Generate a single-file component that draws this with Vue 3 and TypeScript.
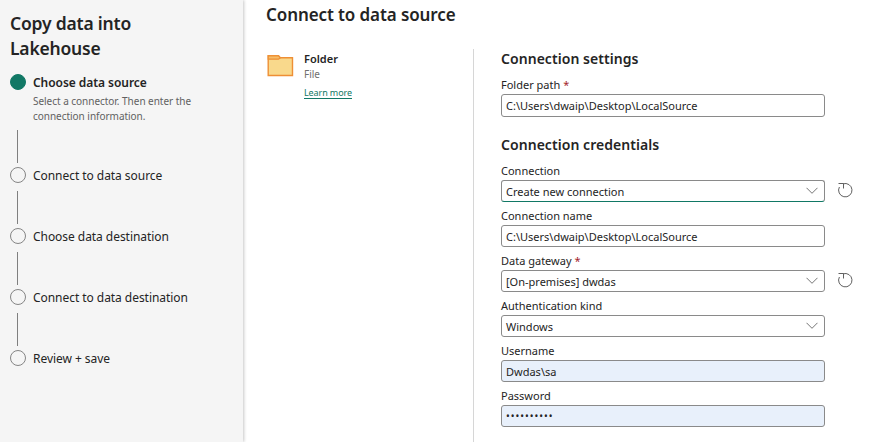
<script setup lang="ts">
const steps = [
  { title: 'Choose data source', desc: 'Select a connector. Then enter the connection information.', active: true },
  { title: 'Connect to data source' },
  { title: 'Choose data destination' },
  { title: 'Connect to data destination' },
  { title: 'Review + save' },
]

type Field = {
  label: string
  value: string
  required?: boolean
  select?: boolean
  refresh?: boolean
  filled?: boolean
  focus?: boolean
  secret?: boolean
}

const path = 'C:\\Users\\dwaip\\Desktop\\LocalSource'

const credentials: Field[] = [
  { label: 'Connection', value: 'Create new connection', select: true, refresh: true, focus: true },
  { label: 'Connection name', value: path },
  { label: 'Data gateway', value: '[On-premises] dwdas', required: true, select: true, refresh: true },
  { label: 'Authentication kind', value: 'Windows', select: true },
  { label: 'Username', value: 'Dwdas\\sa', filled: true },
  { label: 'Password', value: '••••••••••', filled: true, secret: true },
]
</script>

<template>
  <div class="page">
    <aside class="side">
      <h1 class="side-title">Copy data into Lakehouse</h1>
      <ol class="steps">
        <li v-for="(s, i) in steps" :key="s.title" class="step">
          <div class="step-head">
            <span class="dot" :class="{ 'dot-on': s.active }"></span>
            <div class="step-text">
              <div class="step-name" :class="{ 'step-name-on': s.active }">{{ s.title }}</div>
              <div v-if="s.desc" class="step-desc">{{ s.desc }}</div>
            </div>
          </div>
          <div v-if="i < steps.length - 1" class="step-line"></div>
        </li>
      </ol>
    </aside>

    <main class="main">
      <h2 class="main-title">Connect to data source</h2>
      <div class="body">
        <section class="source">
          <svg class="folder" width="27" height="23" viewBox="0 0 27 23">
            <path d="M1.200 21.500V1.800h10.300l1.800 2h12.200v17.700z" fill="#f9d98c" stroke="#ee8f35" stroke-width="1.400"/>
            <path d="M1.200 1.800h10.300l1.800 2-1.800 1.400H1.200z" fill="#f6bd68" stroke="#ee8f35" stroke-width="1.200"/>
          </svg>
          <div class="source-text">
            <div class="source-name">Folder</div>
            <div class="source-kind">File</div>
            <a class="source-link">Learn more</a>
          </div>
        </section>

        <section class="form">
          <h3 class="form-title">Connection settings</h3>
          <div class="field">
            <label class="field-label">Folder path <span class="req">*</span></label>
            <div class="box box-tall"><span>{{ path }}</span></div>
          </div>

          <h3 class="form-title form-title-2">Connection credentials</h3>
          <div v-for="f in credentials" :key="f.label" class="field">
            <label class="field-label">{{ f.label }} <span v-if="f.required" class="req">*</span></label>
            <div class="field-row">
              <div class="box" :class="{ 'box-filled': f.filled, 'box-focus': f.focus, 'box-secret': f.secret }">
                <span>{{ f.value }}</span>
                <svg v-if="f.select" class="chevron" width="12" height="7" viewBox="0 0 12 7">
                  <path d="M.5.800l5.500 5.500L11.500.800" fill="none" stroke="#757575" stroke-width="1"/>
                </svg>
              </div>
              <svg v-if="f.refresh" class="refresh" width="17" height="17" viewBox="0 0 17 17">
                <path d="M6 1.900A6.700 6.700 0 1 1 2.400 5" fill="none" stroke="#616161" stroke-width="1"/>
                <path d="M1.500 1.500H6.500V6.500" fill="none" stroke="#616161" stroke-width="1"/>
              </svg>
            </div>
          </div>
        </section>
      </div>
    </main>
  </div>
</template>

<style>
html, body { margin: 0; background: #fff; }
</style>

<style scoped>
.page {
  display: flex;
  width: 887px;
  height: 442px;
  overflow: hidden;
  font-family: "Noto Sans", "Open Sans", sans-serif;
  color: #242424;
}

.side {
  width: 243px;
  flex: none;
  box-sizing: border-box;
  padding: 11px 10px 0;
  background: #f5f5f5;
  box-shadow: 1px 0 3px rgba(0, 0, 0, 0.22);
}
.side-title {
  margin: 0;
  width: 150px;
  font-size: 17.5px;
  font-weight: 600;
  line-height: 25px;
  letter-spacing: -0.2px;
}
.steps {
  list-style: none;
  margin: 13px 0 0;
  padding: 0;
}
.step-head {
  display: flex;
  gap: 7px;
}
.dot {
  width: 16px;
  height: 16px;
  flex: none;
  box-sizing: border-box;
  border: 1px solid #858585;
  border-radius: 50%;
}
.dot-on {
  background: #117865;
  border-color: #117865;
}
.step-name {
  font-size: 12px;
  line-height: 16px;
  letter-spacing: -0.05px;
  padding-top: 1px;
}
.step-name-on {
  font-weight: 600;
}
.step-desc {
  width: 180px;
  margin-top: 3px;
  font-size: 10px;
  line-height: 15px;
  color: #616161;
  letter-spacing: -0.03px;
}
.step-line {
  width: 1px;
  height: 33px;
  margin: 7px 0 4px 7px;
  background: #7f7f7f;
}
.step:first-child .step-line { margin-top: 6px; }

.main {
  flex: 1;
  min-width: 0;
  padding-left: 23px;
}
.main-title {
  margin: 0;
  font-size: 17px;
  font-weight: 600;
  line-height: 29px;
  letter-spacing: -0.1px;
}
.body {
  display: flex;
  margin-top: 20px;
}
.source {
  display: flex;
  gap: 10px;
  width: 207px;
  flex: none;
  padding-top: 4px;
  border-right: 1px solid #d6d6d6;
  height: 389px;
}
.folder {
  margin: 1px 0 0 1px;
}
.source-name {
  font-size: 11px;
  font-weight: 600;
  line-height: 14px;
  margin-top: -1px;
}
.source-kind {
  font-size: 10px;
  line-height: 14px;
  margin-top: 1px;
  color: #707070;
}
.source-link {
  display: block;
  width: fit-content;
  margin-top: 7px;
  font-size: 9px;
  line-height: 10px;
  letter-spacing: -0.1px;
  color: #117865;
  border-bottom: 1px solid #117865;
}

.form {
  padding-left: 27px;
  box-sizing: border-box;
  flex: 1;
}
.form-title {
  margin: 0;
  font-size: 14px;
  font-weight: 600;
  line-height: 20px;
  letter-spacing: 0.05px;
}
.form-title-2 { margin-top: 18px; }
.form-title + .field { margin-top: 8px; }
.field-label {
  display: block;
  font-size: 11px;
  line-height: 15px;
  margin-bottom: 2px;
}
.field + .field { margin-top: 6px; }
.req { color: #a4262c; }
.field-row {
  display: flex;
  align-items: center;
  gap: 12px;
}
.box {
  flex: none;
  width: 324px;
  height: 22px;
  box-sizing: border-box;
  display: flex;
  align-items: center;
  justify-content: space-between;
  padding: 0 6px 0 4px;
  border: 1px solid #8a8a8a;
  border-radius: 3px;
  font-size: 11px;
  background: #fff;
}
.box-tall { height: 23px; }
.box-filled { background: #e8f0fb; }
.box-focus { border-bottom-color: #117865; }
.box-secret { font-size: 10px; letter-spacing: 1px; }
.chevron { margin-top: -2px; }
.refresh {
  flex: none;
  margin-top: -2px;
}
</style>
